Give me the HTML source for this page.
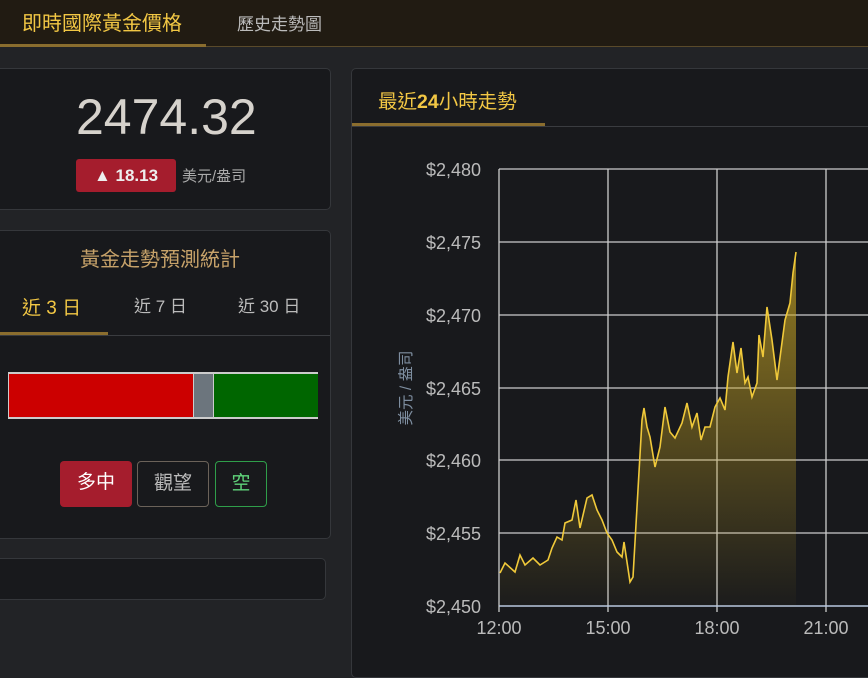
<!DOCTYPE html><html><head><meta charset="utf-8"><style>
*{margin:0;padding:0;box-sizing:border-box}
body{width:868px;height:665px;overflow:hidden;background:#222326;font-family:"Liberation Sans","Noto Sans CJK TC",sans-serif;position:relative}
.nav{position:absolute;left:0;top:0;width:868px;height:47px;background:#211b12;border-bottom:1px solid #5a4a2a}
.nav .t1{position:absolute;left:22px;top:7px;font-size:20px;color:#f2c744}
.nav .u1{position:absolute;left:0;top:44px;width:206px;height:3px;background:#8a6d2e}
.nav .t2{position:absolute;left:237px;top:10px;font-size:17px;color:#bbb}
.card{position:absolute;background:#18191c;border:1px solid #35373b;border-radius:5px}
.price{position:absolute;left:76px;top:88px;font-size:50px;color:#d6d2cc}
.chg{position:absolute;left:76px;top:159px;width:100px;height:33px;background:#a51d2d;border-radius:3px;color:#eee;font-weight:bold;font-size:17px;text-align:center;line-height:33px}
.unit{position:absolute;left:182px;top:165px;font-size:15px;color:#aaa}
.bar{position:absolute;top:372px;height:47px;border-top:2px solid #ccc;border-bottom:2px solid #ccc}
.btn{position:absolute;top:461px;height:46px;border-radius:4px;font-size:19px;text-align:center;line-height:44px}
</style></head><body>
<div class="nav"><div class="t1">即時國際黃金價格</div><div class="u1"></div><div class="t2">歷史走勢圖</div></div>
<div class="card" style="left:-6px;top:68px;width:337px;height:142px"></div>
<div class="price">2474.32</div>
<div class="chg">▲ 18.13</div>
<div class="unit">美元/盎司</div>
<div class="card" style="left:-6px;top:230px;width:337px;height:309px"></div>
<div style="position:absolute;left:80px;top:243px;font-size:20px;color:#c8a36a">黃金走勢預測統計</div>
<div style="position:absolute;left:22px;top:293px;font-size:19px;color:#f2c744">近 3 日</div>
<div style="position:absolute;left:134px;top:292px;font-size:17px;color:#bbb">近 7 日</div>
<div style="position:absolute;left:238px;top:292px;font-size:17px;color:#bbb">近 30 日</div>
<div style="position:absolute;left:0;top:335px;width:330px;height:1px;background:#3a3c40"></div>
<div style="position:absolute;left:0;top:332px;width:108px;height:3px;background:#8a6d2e"></div>
<div class="bar" style="left:8px;width:185px;background:#cc0000;border-left:1px solid #ccc"></div>
<div class="bar" style="left:193px;width:21px;background:#6c757d;border-left:1px solid #ccc;border-right:1px solid #ccc"></div>
<div class="bar" style="left:214px;width:104px;background:#006600"></div>
<div class="btn" style="left:60px;width:72px;background:#a51d2d;color:#fff">多中</div>
<div class="btn" style="left:137px;width:72px;border:1px solid #6b6259;color:#bbb">觀望</div>
<div class="btn" style="left:215px;width:52px;border:1px solid #2f9e4a;color:#5fd37a">空</div>
<div class="card" style="left:-6px;top:558px;width:332px;height:42px"></div>
<div class="card" style="left:351px;top:68px;width:530px;height:610px"></div>
<div style="position:absolute;left:378px;top:85px;font-size:19.5px;color:#f2c744">最近<b>24</b>小時走勢</div>
<div style="position:absolute;left:352px;top:126px;width:516px;height:1px;background:#3a3c40"></div>
<div style="position:absolute;left:352px;top:123px;width:193px;height:3px;background:#8a6d2e"></div>
<svg style="position:absolute;left:0;top:0" width="868" height="665" font-family="Liberation Sans, sans-serif">
<defs><linearGradient id="g" x1="0" y1="0" x2="0" y2="1"><stop offset="0" stop-color="#c9a623" stop-opacity=".7"/><stop offset="1" stop-color="#c9a623" stop-opacity=".02"/></linearGradient></defs>
<g stroke="#ccc" stroke-width="1.3">
<line x1="499" y1="169" x2="868" y2="169"/><line x1="499" y1="242" x2="868" y2="242"/><line x1="499" y1="315" x2="868" y2="315"/><line x1="499" y1="388" x2="868" y2="388"/><line x1="499" y1="460" x2="868" y2="460"/><line x1="499" y1="533" x2="868" y2="533"/>
<line x1="608" y1="169" x2="608" y2="612"/><line x1="717" y1="169" x2="717" y2="612"/><line x1="826" y1="169" x2="826" y2="612"/><line x1="499" y1="169" x2="499" y2="612"/>
</g>
<line x1="499" y1="606" x2="868" y2="606" stroke="#b8c8e0" stroke-width="1.5"/>
<path fill="url(#g)" d="M500,573 L505,563 515,572 520,555 525,565 533,558 540,565 548,560 552,548 557,537 562,540 565,523 572,520 576,500 580,528 587,498 592,495 597,510 602,520 607,533 612,540 617,552 622,557 624,542 630,582 633,577 637,507 642,420 644,408 647,427 650,437 655,467 660,447 665,407 670,432 675,438 682,423 687,403 692,427 697,413 701,440 705,427 710,427 715,407 720,398 725,410 728,377 733,342 737,373 741,348 745,383 748,377 752,397 757,383 759,335 763,357 767,307 772,340 777,380 781,350 785,320 790,303 793,273 796,252 L796,606 L500,606Z"/>
<path fill="none" stroke="#f0c93a" stroke-width="1.6" d="M500,573 L505,563 515,572 520,555 525,565 533,558 540,565 548,560 552,548 557,537 562,540 565,523 572,520 576,500 580,528 587,498 592,495 597,510 602,520 607,533 612,540 617,552 622,557 624,542 630,582 633,577 637,507 642,420 644,408 647,427 650,437 655,467 660,447 665,407 670,432 675,438 682,423 687,403 692,427 697,413 701,440 705,427 710,427 715,407 720,398 725,410 728,377 733,342 737,373 741,348 745,383 748,377 752,397 757,383 759,335 763,357 767,307 772,340 777,380 781,350 785,320 790,303 793,273 796,252"/>
<g fill="#bbb" font-size="18" text-anchor="end">
<text x="481" y="176">$2,480</text><text x="481" y="249">$2,475</text><text x="481" y="322">$2,470</text><text x="481" y="395">$2,465</text><text x="481" y="467">$2,460</text><text x="481" y="540">$2,455</text><text x="481" y="613">$2,450</text></g>
<g fill="#bbb" font-size="18" text-anchor="middle"><text x="499" y="634">12:00</text><text x="608" y="634">15:00</text><text x="717" y="634">18:00</text><text x="826" y="634">21:00</text></g>
<text transform="translate(411,388) rotate(-90)" fill="#7e8ea0" font-size="15.5" text-anchor="middle" font-family="Liberation Sans, Noto Sans CJK TC, sans-serif">美元 / 盎司</text>
</svg>
</body></html>
